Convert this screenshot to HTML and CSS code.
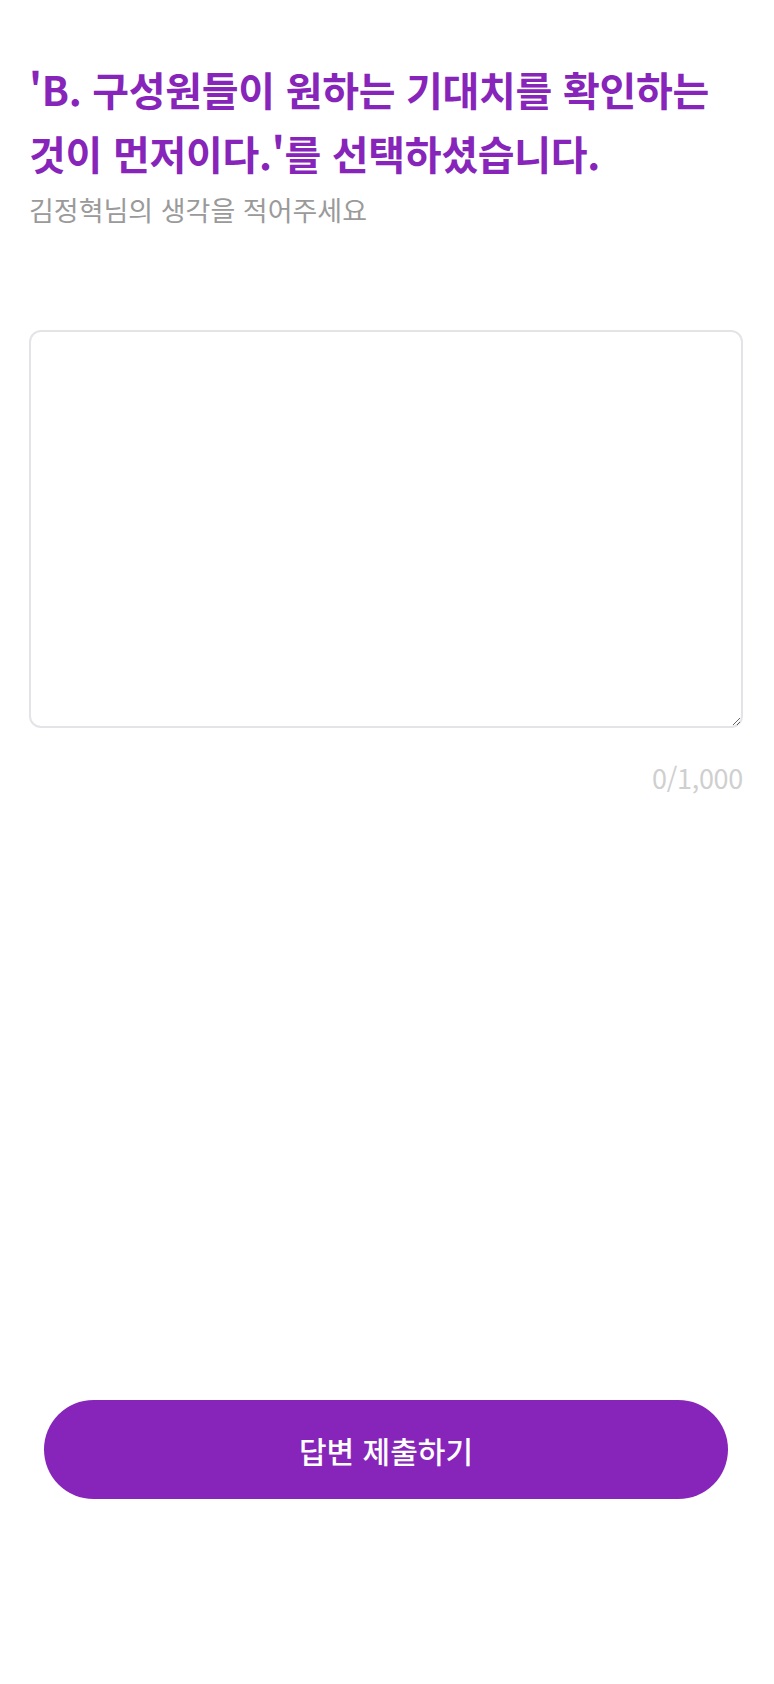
FILE: index.html
```html
<!DOCTYPE html>
<html lang="ko">
<head>
<meta charset="utf-8">
<title>답변 작성</title>
<link rel="stylesheet" href="styles.css">
</head>
<body>
<main class="page">
  <section class="content">
    <h1 class="title">'B. 구성원들이 원하는 기대치를 확인하는 것이 먼저이다.'를 선택하셨습니다.</h1>
    <p class="subtitle">김정혁님의 생각을 적어주세요</p>
    <textarea class="answer" maxlength="1000"></textarea>
    <div class="counter">0/1,000</div>
  </section>
  <div class="actions">
    <button class="submit" type="button">답변 제출하기</button>
  </div>
</main>
</body>
</html>
```

FILE: styles.css
```css
* { box-sizing: border-box; }
html, body { margin: 0; padding: 0; background: #ffffff; }
body {
  font-family: "Noto Sans CJK KR", "Noto Sans", sans-serif;
}
.page {
  min-height: 100vh;
  display: flex;
  flex-direction: column;
}
.content {
  padding: 57px 31px 0 29px;
  display: flex;
  flex-direction: column;
}
.title {
  margin: 0;
  font-size: 40px;
  line-height: 64px;
  font-weight: 700;
  letter-spacing: -0.3px;
  color: #8725ba;
}
.subtitle {
  margin: 7px 0 0;
  font-size: 27px;
  line-height: 36px;
  letter-spacing: 0;
  color: #9a9a9a;
}
.answer {
  margin-top: 102px;
  height: 398px;
  width: 100%;
  border: 2px solid #e4e4e8;
  border-radius: 12px;
  padding: 16px;
  font: inherit;
  font-size: 24px;
  resize: vertical;
  outline: none;
  background: #fff;
}
.counter {
  margin-top: 32px;
  text-align: right;
  font-size: 27px;
  line-height: 36px;
  color: #cfcfcf;
  letter-spacing: -0.3px;
}
.actions {
  margin-top: auto;
  padding: 0 46px 185px 44px;
}
.submit {
  width: 100%;
  height: 99px;
  border: none;
  border-radius: 50px;
  background: #8725ba;
  color: #ffffff;
  font-family: inherit;
  font-size: 30px;
  letter-spacing: 0;
  font-weight: 500;
}
```
